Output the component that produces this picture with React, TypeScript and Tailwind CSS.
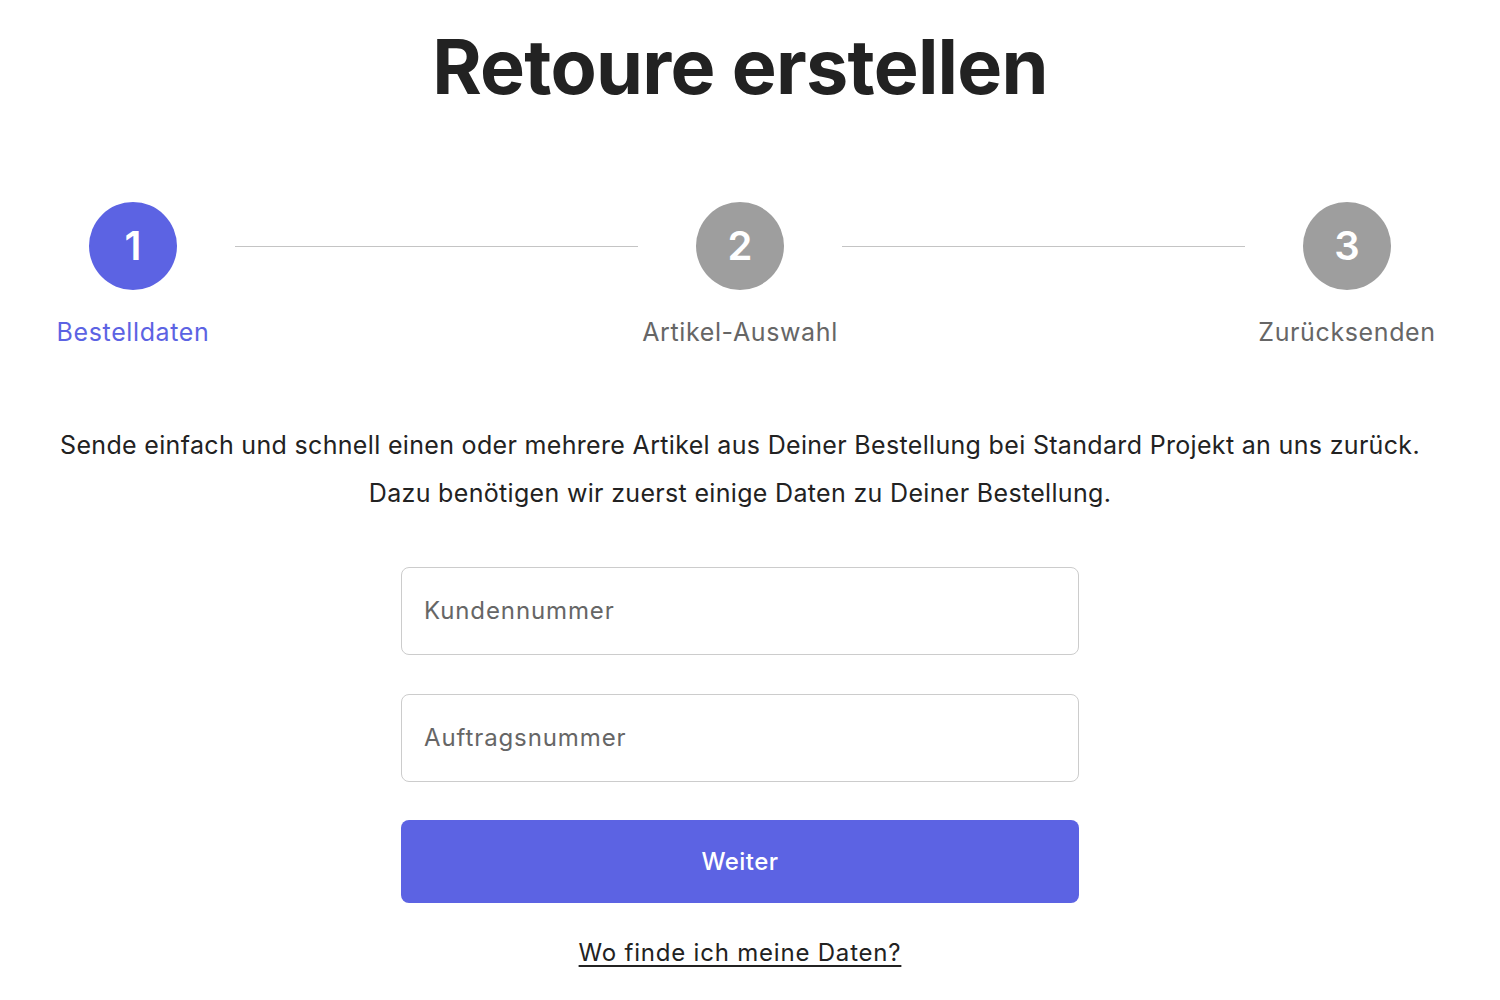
import { useState } from 'react'

const STEPS = [
  { n: 1, label: 'Bestelldaten' },
  { n: 2, label: 'Artikel-Auswahl' },
  { n: 3, label: 'Zurücksenden' },
]

function Stepper({ active }: { active: number }) {
  return (
    <div className="flex items-start px-[33px]">
      {STEPS.map((step, i) => {
        const isActive = step.n === active
        return (
          <div key={step.n} className="contents">
            {i > 0 && <div className="mx-[2px] mt-[44px] h-px flex-1 bg-[#c4c4c4]" />}
            <div className="flex w-[200px] flex-col items-center">
              <div
                className={`flex h-[88px] w-[88px] items-center justify-center rounded-full text-[40px] font-semibold text-white ${
                  isActive ? 'bg-[#5c63e3]' : 'bg-[#9e9e9e]'
                }`}
              >
                {step.n}
              </div>
              <div
                className={`mt-[24px] text-[25px] tracking-[0.025em] ${
                  isActive ? 'text-[#5c63e3]' : 'text-[#666666]'
                }`}
              >
                {step.label}
              </div>
            </div>
          </div>
        )
      })}
    </div>
  )
}

export default function App() {
  const [kunde, setKunde] = useState('')
  const [auftrag, setAuftrag] = useState('')

  return (
    <div className="min-h-screen bg-white font-['Inter',sans-serif] text-[#222222]">
      <div className="w-[1480px] pb-10">
        <h1 className="pt-[22px] text-center text-[75.5px] font-bold leading-[1.2] tracking-[-0.01em]">
          Retoure erstellen
        </h1>

        <div className="mt-[89px]">
          <Stepper active={1} />
        </div>

        <div className="mt-[70px] text-center text-[25px] leading-[48px] tracking-[0.013em]">
          <p>Sende einfach und schnell einen oder mehrere Artikel aus Deiner Bestellung bei Standard Projekt an uns zurück.</p>
          <p>Dazu benötigen wir zuerst einige Daten zu Deiner Bestellung.</p>
        </div>

        <form className="mx-auto mt-[50px] flex w-[678px] flex-col" onSubmit={e => e.preventDefault()}>
          <input
            value={kunde}
            onChange={e => setKunde(e.target.value)}
            placeholder="Kundennummer"
            className="h-[88px] rounded-[8px] border border-[#cccccc] px-[22px] pb-[2px] text-[24px] tracking-[0.037em] outline-none placeholder:text-[#666666]"
          />
          <input
            value={auftrag}
            onChange={e => setAuftrag(e.target.value)}
            placeholder="Auftragsnummer"
            className="mt-[39px] h-[88px] rounded-[8px] border border-[#cccccc] px-[22px] pb-[2px] text-[24px] tracking-[0.037em] outline-none placeholder:text-[#666666]"
          />
          <button
            type="submit"
            className="mt-[38px] h-[83px] rounded-[8px] bg-[#5c63e3] text-[24px] font-medium tracking-[0.02em] text-white"
          >
            Weiter
          </button>
          <a href="#" className="mt-[32px] self-center text-[24px] tracking-[0.033em] text-[#222222] underline underline-offset-[4px]">
            Wo finde ich meine Daten?
          </a>
        </form>
      </div>
    </div>
  )
}
